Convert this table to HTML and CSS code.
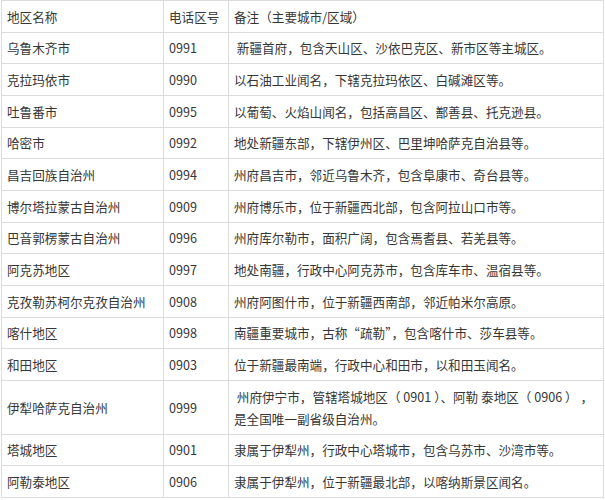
FILE: index.html
```html
<!DOCTYPE html>
<html lang="zh-CN">
<head>
<meta charset="utf-8">
<title>新疆电话区号</title>
<link rel="stylesheet" href="styles.css">
</head>
<body>
<table class="codes">
  <colgroup>
    <col class="c-name">
    <col class="c-code">
    <col class="c-note">
  </colgroup>
  <tr><td>地区名称</td><td>电话区号</td><td>备注（主要城市/区域）</td></tr>
  <tr><td>乌鲁木齐市</td><td>0991</td><td>&nbsp;新疆首府，包含天山区、沙依巴克区、新市区等主城区。</td></tr>
  <tr><td>克拉玛依市</td><td>0990</td><td>以石油工业闻名，下辖克拉玛依区、白碱滩区等。</td></tr>
  <tr><td>吐鲁番市</td><td>0995</td><td>以葡萄、火焰山闻名，包括高昌区、鄯善县、托克逊县。</td></tr>
  <tr><td>哈密市</td><td>0992</td><td>地处新疆东部，下辖伊州区、巴里坤哈萨克自治县等。</td></tr>
  <tr><td>昌吉回族自治州</td><td>0994</td><td>州府昌吉市，邻近乌鲁木齐，包含阜康市、奇台县等。</td></tr>
  <tr><td>博尔塔拉蒙古自治州</td><td>0909</td><td>州府博乐市，位于新疆西北部，包含阿拉山口市等。</td></tr>
  <tr><td>巴音郭楞蒙古自治州</td><td>0996</td><td>州府库尔勒市，面积广阔，包含焉耆县、若羌县等。</td></tr>
  <tr><td>阿克苏地区</td><td>0997</td><td>地处南疆，行政中心阿克苏市，包含库车市、温宿县等。</td></tr>
  <tr><td>克孜勒苏柯尔克孜自治州</td><td>0908</td><td>州府阿图什市，位于新疆西南部，邻近帕米尔高原。</td></tr>
  <tr><td>喀什地区</td><td>0998</td><td>南疆重要城市，古称“疏勒”，包含喀什市、莎车县等。</td></tr>
  <tr><td>和田地区</td><td>0903</td><td>位于新疆最南端，行政中心和田市，以和田玉闻名。</td></tr>
  <tr><td>伊犁哈萨克自治州</td><td>0999</td><td>&nbsp;州府伊宁市，管辖塔城地区（&nbsp;0901&nbsp;）、阿勒 泰地区（&nbsp;0906&nbsp;）&nbsp;，<br>是全国唯一副省级自治州。</td></tr>
  <tr><td>塔城地区</td><td>0901</td><td>隶属于伊犁州，行政中心塔城市，包含乌苏市、沙湾市等。</td></tr>
  <tr><td>阿勒泰地区</td><td>0906</td><td>隶属于伊犁州，位于新疆最北部，以喀纳斯景区闻名。</td></tr>
</table>
</body>
</html>
```

FILE: styles.css
```css
html, body {
  margin: 0;
  padding: 0;
  background: #ffffff;
}

body {
  padding: 0 0 0 1px;
  font-family: "Noto Sans CJK SC", "Noto Sans", sans-serif;
  font-size: 12.6px;
  color: #363636;
}

.codes {
  border-collapse: collapse;
  width: 602px;
  table-layout: fixed;
}

.c-name { width: 162px; }
.c-code { width: 65px; }
.c-note { width: 375px; }

.codes td {
  border: 1px solid #dcdcdc;
  padding: 4.8px 5px 3.87px;
  line-height: 22px;
  white-space: nowrap;
  vertical-align: middle;
}
```
